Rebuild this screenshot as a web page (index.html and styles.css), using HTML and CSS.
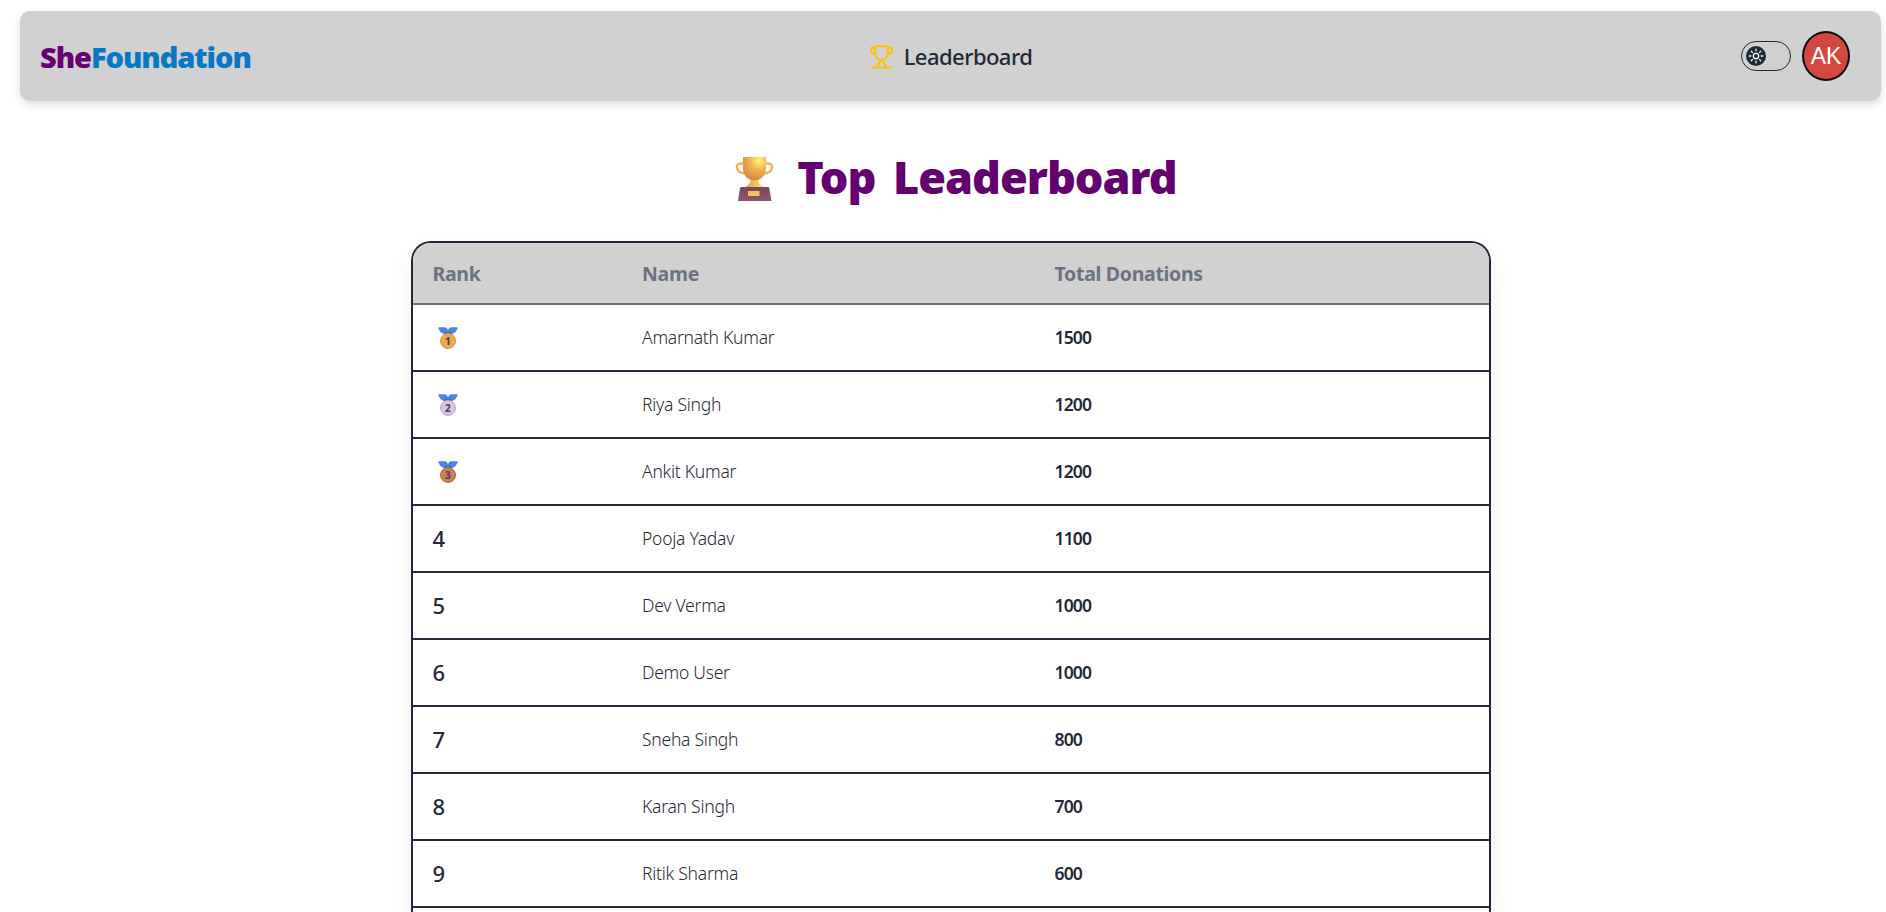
FILE: index.html
```html
<!DOCTYPE html>
<html lang="en">
<head>
<meta charset="utf-8">
<title>SheFoundation – Leaderboard</title>
<link rel="stylesheet" href="styles.css">
</head>
<body>
<svg width="0" height="0" class="defs">
  <defs>
    <radialGradient id="cup" cx=".7" cy=".15" r=".8"><stop offset="0" stop-color="#fff780"/><stop offset=".5" stop-color="#f0b552"/><stop offset="1" stop-color="#dc8c4c"/></radialGradient>
    <linearGradient id="stem"><stop offset="0" stop-color="#e0994a"/><stop offset="1" stop-color="#ffe56b"/></linearGradient>
    <linearGradient id="base" x2="0" y2="1"><stop offset="0" stop-color="#784a58"/><stop offset="1" stop-color="#8f5570"/></linearGradient>
    <symbol id="ribbon" viewBox="0 0 20 22"><path d="M1 .3h6.200Q9 .3 10 3.200 11 .3 12.800.3H19q1 0 .7 1.200Q18.500 5 14.500 7h-9Q1.500 5 .3 1.500 0 .3 1 .3z" fill="#5082e8"/><path d="M7 4.500 10 5.500l3-1V7H7z" fill="#3c68c4"/></symbol>
  </defs>
</svg>
<header class="navbar">
  <a class="logo"><span class="logo-she">She</span><span class="logo-foundation">Foundation</span></a>
  <a class="nav-link">
    <svg class="nav-icon" viewBox="0 0 24 24"><path d="M6 9H4.500A2.500 2.500 0 0 1 2 6.500V5a1.500 1.500 0 0 1 1.500-1.500H6M18 9h1.500A2.500 2.500 0 0 0 22 6.500V5a1.500 1.500 0 0 0-1.500-1.500H18M6 3.500A1.500 1.500 0 0 1 7.500 2h9A1.500 1.500 0 0 1 18 3.500V9a6 6.500 0 0 1-12 0zM11 15.300 7.500 22.500M13 15.300l3.500 7.200M3 22.500h18"/></svg>
    <span>Leaderboard</span>
  </a>
  <div class="nav-actions">
    <div class="toggle"><div class="knob">
      <svg viewBox="0 0 20 20"><circle cx="10" cy="10" r="2.700"/><path d="M10 3.200v1.600M10 15.200v1.600M3.200 10h1.600M15.200 10h1.600M5.300 5.300l1.100 1.100M13.600 13.600l1.100 1.100M5.300 14.700l1.100-1.100M13.600 6.400l1.100-1.100"/></svg>
    </div></div>
    <div class="avatar">AK</div>
  </div>
</header>
<main class="page">
  <h1 class="title">
    <svg class="trophy" viewBox="0 0 60 60">
      <path d="M20 18.500h-3.500c-2.500 0-4 1.800-3.500 4.200.7 3.800 4.500 5.800 9 5.800M41 18.500h3.500c2.500 0 4 1.800 3.500 4.200-.7 3.800-4.500 5.800-9 5.800" fill="none" stroke="#eeb355" stroke-width="2.400"/>
      <path d="M27 33h7c.3 4.500 1.700 7 5.500 8.500v2h-18v-2c3.800-1.500 5.200-4 5.500-8.500z" fill="url(#stem)"/>
      <path d="M19 12h23v11c0 8-5 12.500-11.500 12.500S19 31 19 23z" fill="url(#cup)"/>
      <path d="M17.500 42h26.300c.8 0 1.300.4 1.500 1.200L47.500 56h-33.500l2-12.800c.2-.8.700-1.200 1.500-1.200z" fill="url(#base)"/>
      <rect x="24" y="46" width="11.500" height="5" rx=".6" fill="#f3bf62"/>
    </svg>
    <span>Top Leaderboard</span>
  </h1>
  <section class="board">
    <div class="row head"><span>Rank</span><span>Name</span><span>Total Donations</span></div>
    <div class="row"><span class="medal"><svg viewBox="0 0 20 22"><use href="#ribbon"/><circle cx="10" cy="14" r="7.500" fill="#efa850" stroke="#db8d3d"/><text x="10" y="17.500">1</text></svg></span><span class="name">Amarnath Kumar</span><span class="total">1500</span></div>
    <div class="row"><span class="medal"><svg viewBox="0 0 20 22"><use href="#ribbon"/><circle cx="10" cy="14" r="7.500" fill="#d5c6e2" stroke="#b9a6cf"/><text x="10" y="17.500">2</text></svg></span><span class="name">Riya Singh</span><span class="total">1200</span></div>
    <div class="row"><span class="medal"><svg viewBox="0 0 20 22"><use href="#ribbon"/><circle cx="10" cy="14" r="7.500" fill="#c58455" stroke="#ad6945"/><text x="10" y="17.500">3</text></svg></span><span class="name">Ankit Kumar</span><span class="total">1200</span></div>
    <div class="row"><span class="rank">4</span><span class="name">Pooja Yadav</span><span class="total">1100</span></div>
    <div class="row"><span class="rank">5</span><span class="name">Dev Verma</span><span class="total">1000</span></div>
    <div class="row"><span class="rank">6</span><span class="name">Demo User</span><span class="total">1000</span></div>
    <div class="row"><span class="rank">7</span><span class="name">Sneha Singh</span><span class="total">800</span></div>
    <div class="row"><span class="rank">8</span><span class="name">Karan Singh</span><span class="total">700</span></div>
    <div class="row"><span class="rank">9</span><span class="name">Ritik Sharma</span><span class="total">600</span></div>
  </section>
</main>
</body>
</html>
```
FILE: styles.css
```css
* { box-sizing: border-box; }
body {
  display: flex;
  flex-direction: column;
  margin: 0;
  height: 912px;
  padding: 11px 5px 0 20px;
  overflow: hidden;
  background: #fff;
  color: #1f2937;
  font-family: "Noto Sans", "Open Sans", sans-serif;
}
.defs { position: absolute; }
.navbar {
  display: grid;
  flex: none;
  grid-template-columns: 1fr auto 1fr;
  align-items: center;
  height: 90px;
  padding: 0 31px 0 20px;
  border-radius: 10px;
  background: #d1d1d1;
  box-shadow: 0 4px 8px rgba(0, 0, 0, .13);
}
.logo { font-size: 29px; font-weight: 900; letter-spacing: -1.05px; }
.logo-she { color: #640070; }
.logo-foundation { color: #0877c4; }
.nav-link {
  display: flex;
  align-items: center;
  gap: 10px;
  margin-left: 11px;
  font-size: 22px;
  font-weight: 500;
  letter-spacing: -.55px;
}
.nav-icon {
  width: 25px;
  height: 25px;
  fill: none;
  stroke: #ffc107;
  stroke-width: 2;
  stroke-linecap: round;
  stroke-linejoin: round;
}
.nav-actions { display: flex; align-items: center; justify-content: flex-end; gap: 11px; }
.toggle {
  display: flex;
  align-items: center;
  width: 50px;
  height: 30px;
  padding: 0 4px;
  border: 1px solid #1f2937;
  border-radius: 15px;
}
.knob { width: 20px; height: 20px; border-radius: 50%; background: #1f2937; }
.knob svg { display: block; fill: none; stroke: #fff; stroke-width: 1.3; stroke-linecap: round; }
.avatar {
  display: flex;
  align-items: center;
  justify-content: center;
  width: 48px;
  height: 50px;
  border: 2px solid #0a0a0a;
  border-radius: 50%;
  background: #d3493f;
  color: #fff;
  font: 23px "Liberation Sans", Arial, sans-serif;
}
.page { display: flex; flex: 1; min-height: 0; flex-direction: column; align-items: center; }
.title {
  display: flex;
  flex: none;
  align-items: center;
  gap: 13px;
  height: 60px;
  margin: 44px 0 36px;
  color: #640070;
  font-size: 45px;
  font-weight: 900;
  letter-spacing: -1px;
  word-spacing: 7px;
  white-space: nowrap;
}
.title span { padding-top: 3px; }
.trophy { width: 60px; height: 60px; }
.board {
  display: flex;
  flex: 1;
  flex-direction: column;
  width: 1080px;
  min-height: 0;
  border: 2px solid #1f2937;
  border-bottom: 0;
  border-radius: 20px 20px 0 0;
  box-shadow: 0 10px 25px rgba(0, 0, 0, .06);
}
.row {
  display: grid;
  flex: none;
  grid-template-columns: 209.5px 412.5px 1fr;
  align-items: center;
  height: 67px;
  padding: 0 20px 2px;
  border-bottom: 2px solid #1f2937;
  font-size: 17.5px;
}
.head {
  height: 62px;
  padding-bottom: 0;
  border-color: #6b7280;
  border-radius: 18px 18px 0 0;
  background: #d1d1d1;
  color: #6b7280;
  font-size: 19.5px;
  font-weight: 700;
  letter-spacing: -.3px;
}
.name { font-weight: 350; letter-spacing: -.25px; }
.total { font-weight: 600; letter-spacing: -.85px; }
.rank { font-size: 22px; font-weight: 550; }
.medal { padding: 2px 0 0 5px; }
.medal svg { display: block; width: 20px; height: 22px; }
.medal use { width: 20px; height: 22px; }
.medal text { fill: #65404f; font-size: 10px; font-weight: 800; text-anchor: middle; }
```
